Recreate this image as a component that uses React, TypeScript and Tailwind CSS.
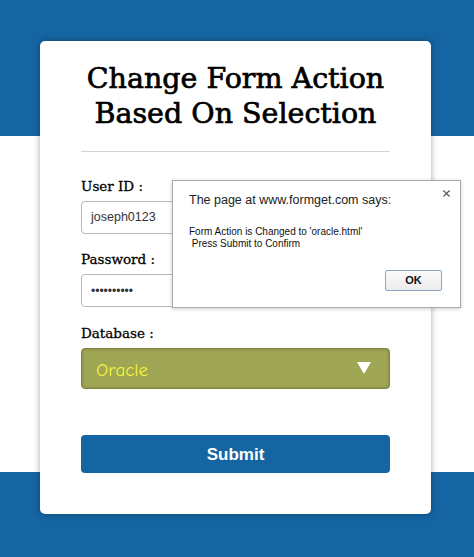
import { X } from "lucide-react";

const serif = { fontFamily: '"DejaVu Serif", serif' };

const Label = ({ text, className }: { text: string; className: string }) => (
  <label
    className={"block text-[13.5px] leading-[18px] text-black [-webkit-text-stroke:0.3px_black] " + className}
    style={serif}
  >
    {text}
  </label>
);

const App = () => {
  return (
    <div className="relative w-[474px] h-[557px] overflow-hidden bg-[linear-gradient(to_bottom,#1565a3_136px,#fff_136px,#fff_472px,#1565a3_472px)]">
      {/* form card */}
      <div className="ml-[40px] mt-[41px] w-[391px] h-[473px] bg-white rounded-[5px] shadow-[0_0_6px_rgba(0,0,0,0.35)] px-[41px] pt-[20px] flex flex-col">
        <h1
          className="text-center text-black text-[28.5px] leading-[35px] font-normal [-webkit-text-stroke:0.7px_black]"
          style={serif}
        >
          Change Form Action
          <br />
          Based On Selection
        </h1>
        <div className="mt-[20px] h-px bg-[#d4d4d4]" />

        <Label text="User ID :" className="mt-[25px]" />
        <div className="mt-[6px] h-[33px] border border-[#b8b8b8] rounded-[4px] flex items-center px-[9px] font-['Liberation_Sans',sans-serif] text-[12.5px] text-[#333]">
          joseph0123
        </div>

        <Label text="Password :" className="mt-[16px]" />
        <div className="mt-[6px] h-[33px] border border-[#b8b8b8] rounded-[4px] flex items-center px-[9px] font-['Liberation_Sans',sans-serif] text-[12px] text-[#333]">
          ••••••••••
        </div>

        <Label text="Database :" className="mt-[17px]" />
        <div className="mt-[6px] h-[41px] bg-[#9fa654] border border-[#7f8443] rounded-[4px] shadow-[inset_0_0_3px_rgba(0,0,0,0.25)] flex items-center justify-between pl-[14px] pr-[18px]">
          <span className="mt-[3px] text-[19px] text-[#f4f43c] font-['Comic_Sans_MS','Comic_Neue',cursive]">
            Oracle
          </span>
          <svg width="14" height="13" viewBox="0 0 14 13">
            <polygon points="0,0 14,0 7,12" fill="#fff" />
          </svg>
        </div>

        <button className="mt-[46px] w-full h-[38px] bg-[#1565a3] rounded-[4px] text-white font-bold text-[17px] leading-[40px] font-['Liberation_Sans',sans-serif]">
          Submit
        </button>
      </div>

      {/* alert dialog over the form */}
      <div className="absolute left-[172px] top-[180px] w-[289px] h-[128px] bg-white border border-[#a9a9a9] shadow-[0_1px_4px_rgba(0,0,0,0.2)] font-['Liberation_Sans',sans-serif] flex flex-col pl-[16px] pr-[8px] pt-[7px]">
        <div className="flex justify-between">
          <p className="mt-[3px] text-[12.5px] text-[#222]">The page at www.formget.com says:</p>
          <X className="text-[#555]" size={11} strokeWidth={2.5} />
        </div>
        <p className="mt-[16px] text-[10px] leading-[12px] text-[#111] whitespace-pre">
          {"Form Action is Changed to 'oracle.html'\n Press Submit to Confirm"}
        </p>
        <div className="mt-[20px] flex justify-end pr-[10px]">
          <button className="w-[57px] h-[21px] border border-[#8fa5c3] rounded-[2px] bg-[linear-gradient(#fafafa,#ececec)] text-[11px] font-bold text-[#111]">
            OK
          </button>
        </div>
      </div>
    </div>
  );
};

export default App;
